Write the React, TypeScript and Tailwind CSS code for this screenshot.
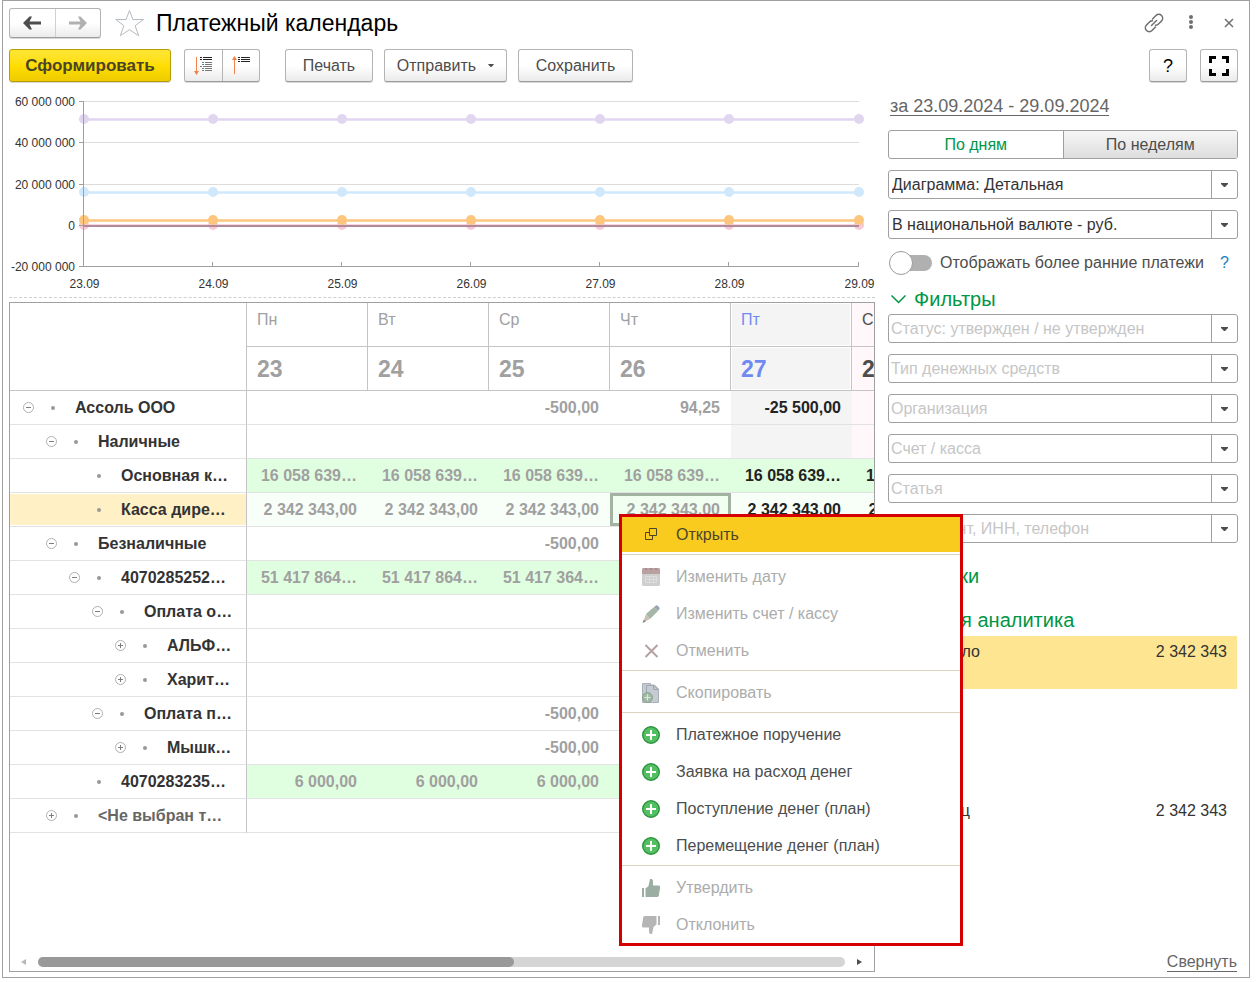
import type { ReactNode } from "react";
import clsx from "clsx";

const days = [
  { name: "Пн", date: "23" },
  { name: "Вт", date: "24" },
  { name: "Ср", date: "25" },
  { name: "Чт", date: "26" },
  { name: "Пт", date: "27" },
  { name: "Сб", date: "28" },
  { name: "Вс", date: "29" },
];

const TODAY = 4;

type Row = {
  label: string;
  level: number;
  toggle?: "minus" | "plus";
  values?: string[];
  green?: boolean;
  selected?: boolean;
  muted?: boolean;
};

const cash = "16 058 639…";
const desk = "2 342 343,00";

const rows: Row[] = [
  { label: "Ассоль ООО", level: 0, toggle: "minus", values: ["", "", "-500,00", "94,25", "-25 500,00"] },
  { label: "Наличные", level: 1, toggle: "minus" },
  { label: "Основная к…", level: 2, green: true, values: [cash, cash, cash, cash, cash, cash] },
  { label: "Касса дире…", level: 2, selected: true, values: [desk, desk, desk, desk, desk, desk] },
  { label: "Безналичные", level: 1, toggle: "minus", values: ["", "", "-500,00"] },
  { label: "4070285252…", level: 2, toggle: "minus", green: true, values: ["51 417 864…", "51 417 864…", "51 417 364…"] },
  { label: "Оплата о…", level: 3, toggle: "minus" },
  { label: "АЛЬФ…", level: 4, toggle: "plus" },
  { label: "Харит…", level: 4, toggle: "plus" },
  { label: "Оплата п…", level: 3, toggle: "minus", values: ["", "", "-500,00"] },
  { label: "Мышк…", level: 4, toggle: "plus", values: ["", "", "-500,00"] },
  { label: "4070283235…", level: 2, green: true, values: ["6 000,00", "6 000,00", "6 000,00"] },
  { label: "<Не выбран т…", level: 1, toggle: "plus", muted: true },
];

const buttonBase =
  "flex items-center justify-center rounded-[3px] border border-[#b4b4b4] border-b-[#9c9c9c] bg-linear-to-b from-white from-50% to-[#ebebeb] text-[#4d4d4d] shadow-[0_1px_0_#d9d9d9]";

function Button({ className, label, children }: { className?: string; label?: string; children: ReactNode }) {
  return (
    <button type="button" aria-label={label} className={clsx(buttonBase, "h-[33px]", className)}>
      {children}
    </button>
  );
}

function Caret({ className = "h-1 w-[7px]" }: { className?: string }) {
  return (
    <svg viewBox="0 0 7 4" className={className} fill="#4d4d4d">
      <path d="M0 0h7v1L4 4H3L0 1z" />
    </svg>
  );
}

function Arrow({ className }: { className?: string }) {
  return (
    <svg viewBox="0 0 18 14" className={clsx("h-3.5 w-[18px]", className)} fill="currentColor">
      <path d="M0 7 6.500.500H9L6.500 5.500H18v3H6.500L9 13.500H6.500z" />
    </svg>
  );
}

function Header() {
  return (
    <header className="flex h-11 items-center">
      <div className={clsx(buttonBase, "h-[30px] w-23")}>
        <button type="button" aria-label="Назад" className="flex h-full flex-1 items-center justify-center border-r border-[#d0d0d0]">
          <Arrow />
        </button>
        <button type="button" aria-label="Вперед" className="flex h-full flex-1 items-center justify-center text-[#b0b0b0]">
          <Arrow className="rotate-180" />
        </button>
      </div>
      <button type="button" aria-label="Избранное" className="ml-3.5">
        <svg viewBox="0 0 30 28" className="h-7 w-[30px]" fill="none" stroke="#b4bac0" strokeWidth="1">
          <path d="M14.5 1.5l3.4 9h10.6l-8.4 6.2 3.6 10-9.2-6-9.2 6 3.6-10L.8 10.500h10.300z" />
        </svg>
      </button>
      <h1 className="ml-[11px] flex-1 text-[23px] text-black">Платежный календарь</h1>
      <div className="flex items-center text-[#6e6e6e]">
        <button type="button" aria-label="Ссылка">
          <svg viewBox="0 0 20 20" className="size-5" fill="none" stroke="currentColor" strokeWidth="1.5" strokeLinecap="round">
            <path d="M8.500 6 12 2.500a3.800 3.800 0 0 1 5.500 5.500l-3 3q-1.300 1.300-3 1.200" />
            <path d="M11.500 14 8 17.500a3.800 3.800 0 0 1-5.500-5.500l3-3q1.300-1.300 3-1.200" />
            <path d="m7.500 12.500 5-5" />
          </svg>
        </button>
        <button type="button" aria-label="Еще" className="ml-[22px]">
          <svg viewBox="0 0 10 16" className="h-4 w-2.5" fill="currentColor">
            <circle cx="5" cy="2" r="2" />
            <circle cx="5" cy="7" r="2" />
            <circle cx="5" cy="12" r="2" />
          </svg>
        </button>
        <button type="button" aria-label="Закрыть" className="mr-1 ml-7">
          <svg viewBox="0 0 10 10" className="size-2.5" fill="none" stroke="currentColor" strokeWidth="1.500">
            <path d="m1 1 8 8M9 1 1 9" />
          </svg>
        </button>
      </div>
    </header>
  );
}

function Toolbar() {
  return (
    <div className="flex pt-1">
      <button
        type="button"
        className="h-[33px] w-[162px] rounded-[3px] border border-[#b89d00] bg-linear-to-b from-[#ffe633] via-[#ffdd00] to-[#edcb00] text-[17px] font-bold text-[#4a4526] shadow-[0_1px_0_#d9d9d9]"
      >
        Сформировать
      </button>
      <div className={clsx(buttonBase, "ml-[13px] h-[33px] w-19")}>
        <button type="button" aria-label="Развернуть группы" className="flex h-full flex-1 items-center justify-center border-r border-[#b4b4b4]">
          <svg viewBox="0 0 18 19" className="h-[19px] w-[18px]" fill="none">
            <path d="M2.500 1v15" stroke="#f0824a" />
            <path d="M0 15h5l-2.500 4z" fill="#f0824a" />
            <path d="M6 1.500h2m1 0h9M6 3.500h2m1 0h9" stroke="#222" />
            <path d="M8 6.500h2m1 0h7M8 8.500h2m1 0h7M6 10.500h2m1 0h9M8 12.500h2m1 0h7M8 14.500h2m1 0h7" stroke="#777" />
          </svg>
        </button>
        <button type="button" aria-label="Свернуть группы" className="flex h-full flex-1 items-center justify-center">
          <svg viewBox="0 0 18 19" className="h-[19px] w-[18px]" fill="none">
            <path d="M2.500 3v15" stroke="#f0824a" />
            <path d="M0 4h5L2.500 0z" fill="#f0824a" />
            <path d="M6 1.500h2m1 0h9M6 3.500h2m1 0h9M6 5.500h2m1 0h9" stroke="#222" />
          </svg>
        </button>
      </div>
      <Button className="ml-[25px] w-22">Печать</Button>
      <Button className="ml-[11px] w-[123px] gap-3">
        Отправить
        <Caret className="h-[3px] w-1.5" />
      </Button>
      <Button className="ml-[11px] w-[115px]">Сохранить</Button>
      <Button className="ml-auto w-[38px] text-lg text-black" label="Справка">
        ?
      </Button>
      <Button className="ml-[13px] w-[38px]" label="Во весь экран">
        <svg viewBox="0 0 20 20" className="size-5" fill="none" stroke="#000" strokeWidth="3">
          <path d="M1.500 7V1.500H7M13 1.500h5.500V7M18.500 13v5.500H13M7 18.500H1.500V13" />
        </svg>
      </Button>
    </div>
  );
}

const chartX = [75, 204, 333, 462, 591, 720, 850];
const gridLines = [
  { y: 11.5, label: "60 000 000" },
  { y: 52.5, label: "40 000 000" },
  { y: 94.5, label: "20 000 000" },
  { y: 135.5, label: "0" },
  { y: 176.5, label: "-20 000 000" },
];
const series = [
  { y: 29, color: "#e0d6f0" },
  { y: 102, color: "#cfe8fc" },
  { y: 135, color: "#f8c9d6" },
  { y: 130, color: "#fdc67c" },
];

function Chart() {
  return (
    <svg viewBox="0 0 866 207" className="w-full" fontSize="12" fill="#333">
      {gridLines.map((g) => (
        <g key={g.label}>
          <path d={`M75 ${g.y}H850`} stroke="#dcdcdc" />
          <text x="66" y={g.y + 4} textAnchor="end">
            {g.label}
          </text>
        </g>
      ))}
      {series.map((s) => (
        <g key={s.color} fill={s.color}>
          <path d={`M75 ${s.y + 0.5}H850`} stroke={s.color} strokeWidth="2.500" />
          {chartX.map((x) => (
            <circle key={x} cx={x} cy={s.y} r="5" />
          ))}
        </g>
      ))}
      <path d="M75 136H850" stroke="#b08a9a" strokeWidth="2" />
      <g stroke="#a0a0a0">
        <path d="M74.500 11v166M70 176.500h780" />
        {gridLines.map((g) => (
          <path key={g.label} d={`M70 ${g.y}h5`} />
        ))}
        {chartX.slice(1).map((x) => (
          <path key={x} d={`M${x - 0.5} 172v5`} />
        ))}
      </g>
      {chartX.map((x, i) => (
        <text key={x} x={x + 0.5} y="198" textAnchor="middle">
          {days[i].date}.09
        </text>
      ))}
    </svg>
  );
}

function Toggle({ kind }: { kind?: "minus" | "plus" }) {
  if (!kind) return <span className="w-[11px] shrink-0" />;
  return (
    <button type="button" aria-label={kind === "minus" ? "Свернуть" : "Развернуть"} className="shrink-0">
      <svg viewBox="0 0 11 11" className="size-[11px]" fill="none">
        <circle cx="5.500" cy="5.500" r="5" stroke="#b0b0b0" />
        <path d={kind === "minus" ? "M3 5.500h5" : "M3 5.500h5M5.500 3v5"} stroke="#7d7d7d" />
      </svg>
    </button>
  );
}

function cellTone(row: Row, day: number) {
  if (row.green) return "bg-[#e0ffe0]";
  if (row.selected) return "bg-[#f8fff9]";
  if (day === TODAY) return "bg-[#f4f4f4]";
  if (day > TODAY) return "bg-[#fff7f9]";
  return "";
}

function Calendar() {
  return (
    <div className="flex flex-1 flex-col border border-[#a0a0a0]">
      <div className="flex-1 overflow-hidden">
        <table className="w-[1084px] table-fixed border-separate border-spacing-0 font-bold">
          <colgroup>
            <col className="w-[237px]" />
            {days.map((d) => (
              <col key={d.date} />
            ))}
          </colgroup>
          <thead>
            <tr className="h-11">
              <th rowSpan={2} aria-label="Счет" className="border-r border-b border-[#c4c4c4]" />
              {days.map((d, i) => (
                <th
                  key={d.date}
                  className={clsx(
                    "border-r border-b border-[#c4c4c4] pb-2.5 pl-2.5 text-left font-normal",
                    i < TODAY && "text-[#a0a0a0]",
                    i === TODAY && "bg-[#f4f4f4] text-[#6f8bf2] inset-ring inset-ring-white",
                    i > TODAY && "bg-[#fff7f9] text-[#4d4d4d]",
                  )}
                >
                  {d.name}
                </th>
              ))}
            </tr>
            <tr className="h-11">
              {days.map((d, i) => (
                <th
                  key={d.date}
                  className={clsx(
                    "border-r border-b border-[#c4c4c4] pl-2.5 text-left text-[23px] leading-6",
                    i < TODAY && "text-[#a0a0a0]",
                    i === TODAY && "bg-[#f4f4f4] text-[#6f8bf2] inset-ring inset-ring-white",
                    i > TODAY && "bg-[#fff7f9] text-[#4d4d4d]",
                  )}
                >
                  {d.date}
                </th>
              ))}
            </tr>
          </thead>
          <tbody>
            {rows.map((row, index) => (
              <tr key={index} className="h-[34px]">
                <th
                  scope="row"
                  className={clsx(
                    "border-r border-b border-r-[#c4c4c4] border-b-[#e2e2e2] text-left",
                    row.muted ? "text-[#666]" : "text-[#333]",
                    row.selected && "bg-[#fff0c6] shadow-[inset_0_1px_0_#fff,inset_0_-1px_0_#fff]",
                  )}
                >
                  <div className="flex items-center" style={{ paddingLeft: 13 + row.level * 23 }}>
                    <Toggle kind={row.toggle} />
                    <span className="mr-5 ml-[17px] size-1 shrink-0 rounded-full bg-[#999]" />
                    <span className="whitespace-nowrap">{row.label}</span>
                  </div>
                </th>
                {days.map((d, i) => (
                  <td
                    key={d.date}
                    className={clsx(
                      "border-b border-b-[#e2e2e2] pr-[11px] text-right whitespace-nowrap",
                      i < TODAY ? "text-[#a0a0a0]" : "text-[#222]",
                      row.selected && i === 3
                        ? "bg-[#f0fff0] inset-ring-3 inset-ring-[#a2b3a2]"
                        : cellTone(row, i),
                    )}
                  >
                    {row.values?.[i]}
                  </td>
                ))}
              </tr>
            ))}
          </tbody>
        </table>
      </div>
      <div className="flex h-[18px] items-center pr-3 pl-[11px]">
        <svg viewBox="0 0 5 6" className="h-1.5 w-[5px]" fill="#b8b8b8">
          <path d="M5 0v6L0 3z" />
        </svg>
        <div className="mx-3 h-2.5 flex-1 rounded-full bg-[#d5d5d5]">
          <div className="h-full w-[59%] rounded-full bg-[#999]" />
        </div>
        <svg viewBox="0 0 5 6" className="h-1.5 w-[5px]" fill="#4d4d4d">
          <path d="M0 0v6l5-3z" />
        </svg>
      </div>
    </div>
  );
}

function SelectBox({ label, value }: { label: string; value: string }) {
  return (
    <div className="relative h-[29px] rounded-[3px] border border-[#a0a0a0]">
      <select aria-label={label} className="size-full appearance-none pr-7 pl-[3px] text-[#333]">
        <option>{value}</option>
      </select>
      <span className="pointer-events-none absolute inset-y-0 right-0 flex w-[26px] items-center justify-center border-l border-[#a0a0a0]">
        <Caret />
      </span>
    </div>
  );
}

function FilterBox({ placeholder }: { placeholder: string }) {
  return (
    <div className="flex h-[29px] rounded-[3px] border border-[#a0a0a0]">
      <input
        type="text"
        aria-label={placeholder}
        placeholder={placeholder}
        className="min-w-0 flex-1 pl-0.5 placeholder:text-[#c6c6c6]"
      />
      <button type="button" aria-label="Выбрать" className="flex w-[26px] items-center justify-center border-l border-[#a0a0a0]">
        <Caret />
      </button>
    </div>
  );
}

function GroupTitle({ children }: { children: ReactNode }) {
  return (
    <h2 className="text-[#009646]">
      <button type="button" className="flex items-center gap-2 pl-[3px] text-xl leading-6">
        <svg viewBox="0 0 15 9" className="h-[9px] w-[15px]" fill="none" stroke="currentColor" strokeWidth="1.500">
          <path d="m.5.500 7 7 7-7" />
        </svg>
        {children}
      </button>
    </h2>
  );
}

const filters = [
  "Статус: утвержден / не утвержден",
  "Тип денежных средств",
  "Организация",
  "Счет / касса",
  "Статья",
  "Контрагент, ИНН, телефон",
];

function Sidebar() {
  return (
    <aside className="flex w-[350px] shrink-0 flex-col pt-2">
      <a href="#period" className="ml-0.5 self-start border-b border-[#666] text-[18px] leading-[17px] text-[#666]">
        за 23.09.2024 - 29.09.2024
      </a>
      <div className="mt-3.5 flex h-[29px] overflow-hidden rounded-[3px] border border-[#a0a0a0]">
        <button type="button" className="flex-1 text-[#009646]">
          По дням
        </button>
        <button type="button" className="flex-1 border-l border-[#a0a0a0] bg-linear-to-b from-[#f6f6f6] to-[#dedede] text-[#4d4d4d]">
          По неделям
        </button>
      </div>
      <div className="mt-[11px] space-y-[11px]">
        <SelectBox label="Диаграмма" value="Диаграмма: Детальная" />
        <SelectBox label="Валюта" value="В национальной валюте - руб." />
      </div>
      <div className="mt-3 flex h-6 items-center">
        <label className="flex items-center gap-2 text-[#4d4d4d]">
          <input type="checkbox" className="peer sr-only" />
          <span className="ml-0.5 flex h-4 w-[42px] items-center rounded-full bg-[#b0b0b0]">
            <span className="-ml-px size-6 rounded-full border border-[#999] bg-white" />
          </span>
          Отображать более ранние платежи
        </label>
        <a href="#help" className="ml-4 text-[#1b7fc4]">
          ?
        </a>
      </div>
      <div className="mt-3">
        <GroupTitle>Фильтры</GroupTitle>
      </div>
      <div className="mt-[3px] space-y-[11px]">
        {filters.map((f) => (
          <FilterBox key={f} placeholder={f} />
        ))}
      </div>
      <div className="mt-[21px] space-y-5">
        <GroupTitle>Ставки</GroupTitle>
        <GroupTitle>Новая аналитика</GroupTitle>
      </div>
      <dl className="mt-1 mr-px text-[#333]">
        <div className="mb-[106px] flex h-[53px] justify-between bg-[#fee591] pt-1 pr-2.5 pl-3.5">
          <dt>На начало</dt>
          <dd>2 342 343</dd>
        </div>
        <div className="flex justify-between pt-1 pr-2.5 pl-3.5">
          <dt>На конец</dt>
          <dd>2 342 343</dd>
        </div>
      </dl>
      <a href="#collapse" className="mt-auto mr-px self-end border-b border-[#666] leading-[18px] text-[#666]">
        Свернуть
      </a>
    </aside>
  );
}

function PlusIcon() {
  return (
    <svg viewBox="0 0 18 18" className="size-[18px]">
      <circle cx="9" cy="9" r="8.300" fill="#52c060" stroke="#2e9440" strokeWidth="1.400" />
      <path d="M9 4v10M4 9h10" stroke="#fff" strokeWidth="2" />
    </svg>
  );
}

const openIcon = (
  <svg viewBox="0 0 18 18" className="size-[18px]" fill="none" stroke="#4d4526" strokeWidth="1">
    <path d="M7.500 2.500h7v7h-7zM7 6.500H3.500v7h7V10" />
  </svg>
);

const calendarIcon = (
  <svg viewBox="0 0 18 18" className="size-[18px]">
    <rect width="18" height="18" rx="1.500" fill="#cfcfcf" />
    <path d="M0 6V1.500Q0 0 1.500 0h15Q18 0 18 1.500V6z" fill="#b9a1a1" />
    <path d="M4 0v2M9 0v2M14 0v2" stroke="#9f8888" strokeWidth="1.500" />
    <path d="M3.500 8.500h11v6h-11zM3.500 11.500h11M7.500 8.500v6M11.500 8.500v6" fill="none" stroke="#dedede" />
  </svg>
);

const pencilIcon = (
  <svg viewBox="0 0 18 18" className="size-[18px]">
    <path d="m4 9 8-7 4 4-8 8z" fill="#a4b6a8" />
    <path d="m12 2 2-1.500Q15 0 16 1l1 1q1 1 .5 2L16 6z" fill="#9ba5b2" />
    <path d="m4 9 4 5-7 3.500z" fill="#c9bfb4" />
    <path d="m1.800 14.500 2 2L.5 18z" fill="#888" />
  </svg>
);

const cancelIcon = (
  <svg viewBox="0 0 18 18" className="size-[18px]" stroke="#b5a1a1" strokeWidth="2">
    <path d="m3.500 3 12 12M15.500 3l-12 12" />
  </svg>
);

const copyIcon = (
  <svg viewBox="1 0 18 20" className="h-5 w-[18px]">
    <path d="M1.500.500h8V2h4l4 4v13.500h-16z" fill="#c5cbd0" stroke="#a9b1b8" />
    <path d="M5.500 16.500v-14h7l4.500 4M12.500 2.500v4h4.500" fill="none" stroke="#9fa8b0" />
    <circle cx="6.500" cy="14.500" r="5" fill="#a0b8a4" stroke="#8aa58f" />
    <path d="M6.500 11.500v6M3.500 14.500h6" stroke="#dfe8e0" strokeWidth="1.200" />
  </svg>
);

const thumb = (
  <path d="M0 9h2v9H0zM3.500 18V9.500L6.500 7 8 0h1.500Q11 .5 11 2v4.500h6Q18.500 7 18 9l-1.300 8q-.4 1-1.700 1z" />
);

const menu: { label: string; icon: ReactNode; disabled?: boolean }[][] = [
  [
    { label: "Изменить дату", icon: calendarIcon, disabled: true },
    { label: "Изменить счет / кассу", icon: pencilIcon, disabled: true },
    { label: "Отменить", icon: cancelIcon, disabled: true },
  ],
  [{ label: "Скопировать", icon: copyIcon, disabled: true }],
  [
    { label: "Платежное поручение", icon: <PlusIcon /> },
    { label: "Заявка на расход денег", icon: <PlusIcon /> },
    { label: "Поступление денег (план)", icon: <PlusIcon /> },
    { label: "Перемещение денег (план)", icon: <PlusIcon /> },
  ],
  [
    {
      label: "Утвердить",
      icon: <svg viewBox="0 0 18 18" className="size-[18px]" fill="#9cada3">{thumb}</svg>,
      disabled: true,
    },
    {
      label: "Отклонить",
      icon: <svg viewBox="0 0 18 18" className="size-[18px] rotate-180" fill="#b5b5b5">{thumb}</svg>,
      disabled: true,
    },
  ],
];

function ContextMenu() {
  return (
    <div role="menu" className="absolute top-[513px] left-[616px] w-[344px] border-3 border-[#d40000] bg-white">
      <button type="button" role="menuitem" className="mb-0.5 flex h-[35px] w-full items-center gap-4 bg-[#facb1f] pl-5 text-[#4d4526]">
        {openIcon}
        Открыть
      </button>
      {menu.map((group, i) => (
        <div key={i} className="mb-px border-t border-[#d8d4c0] pt-[3px] last:mb-0">
          {group.map((item) => (
            <button
              key={item.label}
              type="button"
              role="menuitem"
              disabled={item.disabled}
              className={clsx("flex h-[37px] w-full items-center gap-4 pl-5", item.disabled ? "text-[#acacac]" : "text-[#4d4d4d]")}
            >
              {item.icon}
              {item.label}
            </button>
          ))}
        </div>
      ))}
    </div>
  );
}

export default function App() {
  return (
    <div className="flex min-h-screen bg-white pr-[7px] pb-1 pl-0.5 font-['Liberation_Sans',Arial,sans-serif] text-base">
      <div className="relative flex min-w-0 flex-1 flex-col border border-[#a0a0a0] pr-[11px] pb-[5px] pl-1.5">
        <Header />
        <Toolbar />
        <main className="flex flex-1 gap-[13px] pt-2">
          <div className="flex min-w-0 flex-1 flex-col">
            <Chart />
            <div className="mb-1 border-t border-dashed border-[#cfcfcf]" />
            <Calendar />
          </div>
          <Sidebar />
        </main>
        <ContextMenu />
      </div>
    </div>
  );
}
